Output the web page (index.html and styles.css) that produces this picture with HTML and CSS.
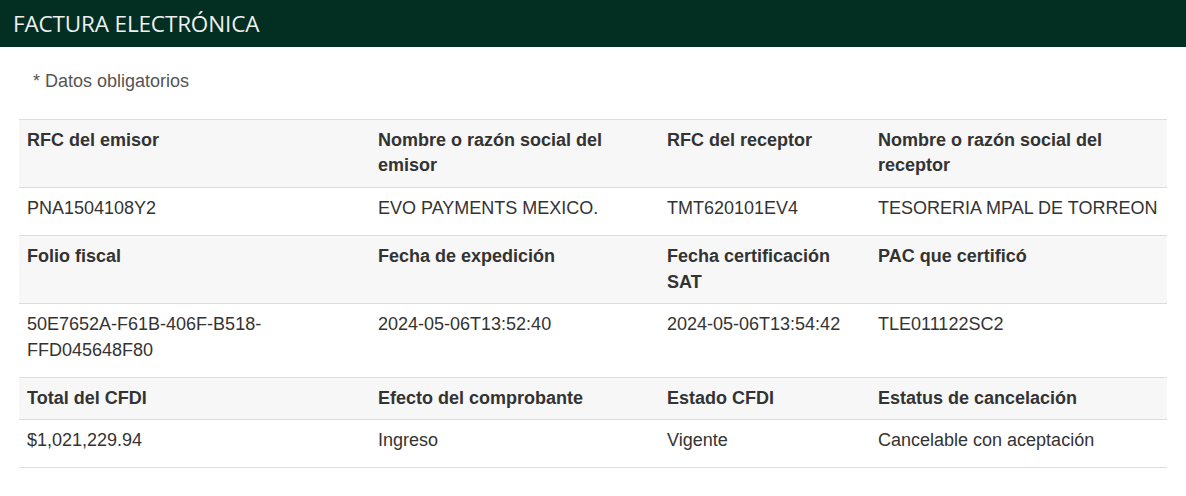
FILE: index.html
```html
<!DOCTYPE html>
<html lang="es">
<head>
<meta charset="utf-8">
<title>Factura electrónica</title>
<link rel="stylesheet" href="styles.css">
</head>
<body>
<header class="topbar"><h1 class="title">FACTURA ELECTRÓNICA</h1></header>
<main class="content">
  <p class="note">* Datos obligatorios</p>
  <table class="data">
    <colgroup>
      <col class="c1"><col class="c2"><col class="c3"><col class="c4">
    </colgroup>
    <tbody>
      <tr class="head"><th>RFC del emisor</th><th>Nombre o razón social del emisor</th><th>RFC del receptor</th><th>Nombre o razón social del receptor</th></tr>
      <tr class="val"><td>PNA1504108Y2</td><td>EVO PAYMENTS MEXICO.</td><td>TMT620101EV4</td><td>TESORERIA MPAL DE TORREON</td></tr>
      <tr class="head"><th>Folio fiscal</th><th>Fecha de expedición</th><th>Fecha certificación SAT</th><th>PAC que certificó</th></tr>
      <tr class="val"><td>50E7652A-F61B-406F-B518-FFD045648F80</td><td>2024-05-06T13:52:40</td><td>2024-05-06T13:54:42</td><td>TLE011122SC2</td></tr>
      <tr class="head"><th>Total del CFDI</th><th>Efecto del comprobante</th><th>Estado CFDI</th><th>Estatus de cancelación</th></tr>
      <tr class="val"><td>$1,021,229.94</td><td>Ingreso</td><td>Vigente</td><td>Cancelable con aceptación</td></tr>
    </tbody>
  </table>
</main>
</body>
</html>
```
FILE: styles.css
```css
html, body {
  margin: 0;
  padding: 0;
  background: #fff;
}
body {
  font-family: "Liberation Sans", Arial, sans-serif;
  font-size: 18px;
  color: #333;
}
.topbar {
  background: #032e22;
  height: 47px;
  display: flex;
  align-items: center;
  padding: 0 13px;
}
.title {
  margin: 0;
  font-family: "Open Sans", sans-serif;
  font-weight: 400;
  font-size: 22.5px;
  color: #eef0ee;
  letter-spacing: -0.15px;
}
.content {
  padding: 0 19px;
}
.note {
  margin: 0;
  padding: 22px 0 0 14px;
  line-height: 25.7px;
  color: #555;
}
.data {
  margin-top: 24px;
  width: 1148px;
  border-collapse: collapse;
  border-bottom: 1px solid #ddd;
}
.c1 { width: 351px; }
.c2 { width: 289px; }
.c3 { width: 211px; }
.c4 { width: 297px; }
.data th, .data td {
  text-align: left;
  vertical-align: top;
  border-top: 1px solid #ddd;
  line-height: 25.7px;
  padding: 8px;
}
.data th {
  font-weight: 700;
  color: #333;
}
.head {
  background: #f7f7f7;
}
.data td {
  padding-bottom: 13px;
  font-weight: 400;
}
```
